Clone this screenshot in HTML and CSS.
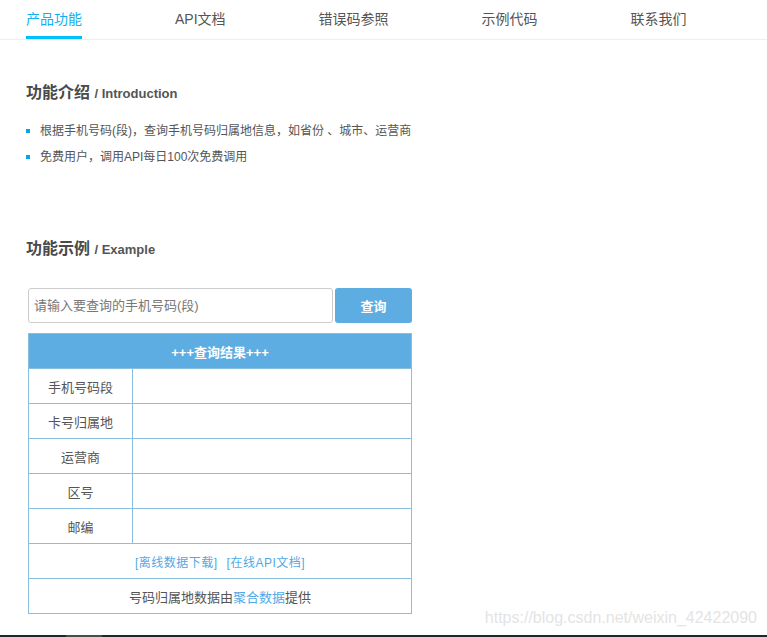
FILE: index.html
```html
<!DOCTYPE html>
<html lang="zh-CN">
  <head>
    <meta charset="UTF-8" />
    <meta name="viewport" content="width=device-width, initial-scale=1.0" />
    <title>手机号码归属地</title>
    <link rel="stylesheet" href="styles.css">
  </head>
  <body>
    <div class="nav">
      <ul class="nav-list">
        <li class="nav-item active">产品功能</li>
        <li class="nav-item">API文档</li>
        <li class="nav-item">错误码参照</li>
        <li class="nav-item">示例代码</li>
        <li class="nav-item">联系我们</li>
      </ul>
    </div>

    <div class="content">
      <h2 class="section-title">功能介绍 <span class="en">/ Introduction</span></h2>
      <ul class="intro-list">
        <li>根据手机号码(段)，查询手机号码归属地信息，如省份 、城市、运营商</li>
        <li>免费用户，调用API每日100次免费调用</li>
      </ul>

      <h2 class="section-title example-title">功能示例 <span class="en">/ Example</span></h2>

      <div class="demo">
        <div class="search">
          <input class="search-input" type="text" placeholder="请输入要查询的手机号码(段)" />
          <button class="search-btn">查询</button>
        </div>

        <table class="result">
          <tr>
            <th colspan="2">+++查询结果+++</th>
          </tr>
          <tr>
            <td class="label">手机号码段</td>
            <td></td>
          </tr>
          <tr>
            <td class="label">卡号归属地</td>
            <td></td>
          </tr>
          <tr>
            <td class="label">运营商</td>
            <td></td>
          </tr>
          <tr>
            <td class="label">区号</td>
            <td></td>
          </tr>
          <tr>
            <td class="label">邮编</td>
            <td></td>
          </tr>
          <tr>
            <td colspan="2" class="links">
              <a href="#">[离线数据下载]</a><a href="#">[在线API文档]</a>
            </td>
          </tr>
          <tr>
            <td colspan="2">号码归属地数据由<a href="#">聚合数据</a>提供</td>
          </tr>
        </table>
      </div>
    </div>

    <div class="watermark">https://blog.csdn.net/weixin_42422090</div>
    <div class="bottom-bar"><span class="bar-thumb"></span></div>
  </body>
</html>
```

FILE: styles.css
```css
* {
  margin: 0;
  padding: 0;
  box-sizing: border-box;
}

body {
  background: #fff;
  font-family: 'Liberation Sans', 'Noto Sans CJK SC', sans-serif;
  color: #555;
  min-height: 100vh;
  position: relative;
}

ul {
  list-style: none;
}

a {
  color: #4fa9e6;
  text-decoration: none;
}

/* top nav */
.nav {
  border-bottom: 1px solid #eee;
}

.nav-list {
  display: flex;
  padding-left: 26px;
  gap: 93px;
}

.nav-item {
  font-size: 14px;
  line-height: 20px;
  padding-top: 9px;
  padding-bottom: 7px;
  border-bottom: 3px solid transparent;
  color: #555;
}

.nav-item.active {
  color: #12aef0;
  border-bottom-color: #00bfff;
}

/* content */
.content {
  padding-left: 26px;
}

.section-title {
  margin-top: 41px;
  font-size: 16px;
  line-height: 24px;
  font-weight: bold;
  color: #4a4a4a;
}

.section-title .en {
  font-size: 13px;
  color: #555;
}

.example-title {
  margin-top: 67px;
}

.intro-list {
  margin-top: 12px;
}

.intro-list li {
  position: relative;
  font-size: 12px;
  line-height: 26px;
  padding-left: 14px;
}

.intro-list li::before {
  content: '';
  position: absolute;
  left: 0;
  top: 11px;
  width: 4px;
  height: 4px;
  background: #0aa2ef;
}

.demo {
  width: 384px;
  margin: 26px 0 0 2px;
}

.search {
  display: flex;
  gap: 2px;
  height: 35px;
}

.search-input {
  width: 305px;
  height: 35px;
  border: 1px solid #ccc;
  border-radius: 3px;
  padding: 0 5px;
  font-family: inherit;
  font-size: 13px;
  color: #555;
  outline: none;
}

.search-input::placeholder {
  color: #777;
}

.search-btn {
  flex: 1;
  border: none;
  border-radius: 3px;
  background: #5dade2;
  color: #fff;
  font-family: inherit;
  font-size: 13px;
  font-weight: bold;
}

.result {
  width: 100%;
  margin-top: 10px;
  border-collapse: collapse;
  font-size: 13px;
}

.result th,
.result td {
  height: 35px;
  border: 1px solid #8bbfdf;
  text-align: center;
  color: #555;
}

.result th {
  background: #5dade2;
  color: #fff;
  font-weight: bold;
}

.result td.label {
  width: 104px;
}

.result td.links {
  font-size: 12px;
  letter-spacing: 0.5px;
}

.result td.links a + a {
  margin-left: 9px;
}

/* overlays */
.watermark {
  position: absolute;
  top: 609px;
  right: 10px;
  font-family: 'Liberation Sans', Arial, sans-serif;
  font-size: 16px;
  color: #e4e4e4;
}

.bottom-bar {
  position: fixed;
  left: 0;
  right: 0;
  bottom: 0;
  height: 2px;
  background: #22252a;
}

.bar-thumb {
  display: block;
  margin-left: 66px;
  width: 36px;
  height: 2px;
  background: #4a4b4d;
}
```
